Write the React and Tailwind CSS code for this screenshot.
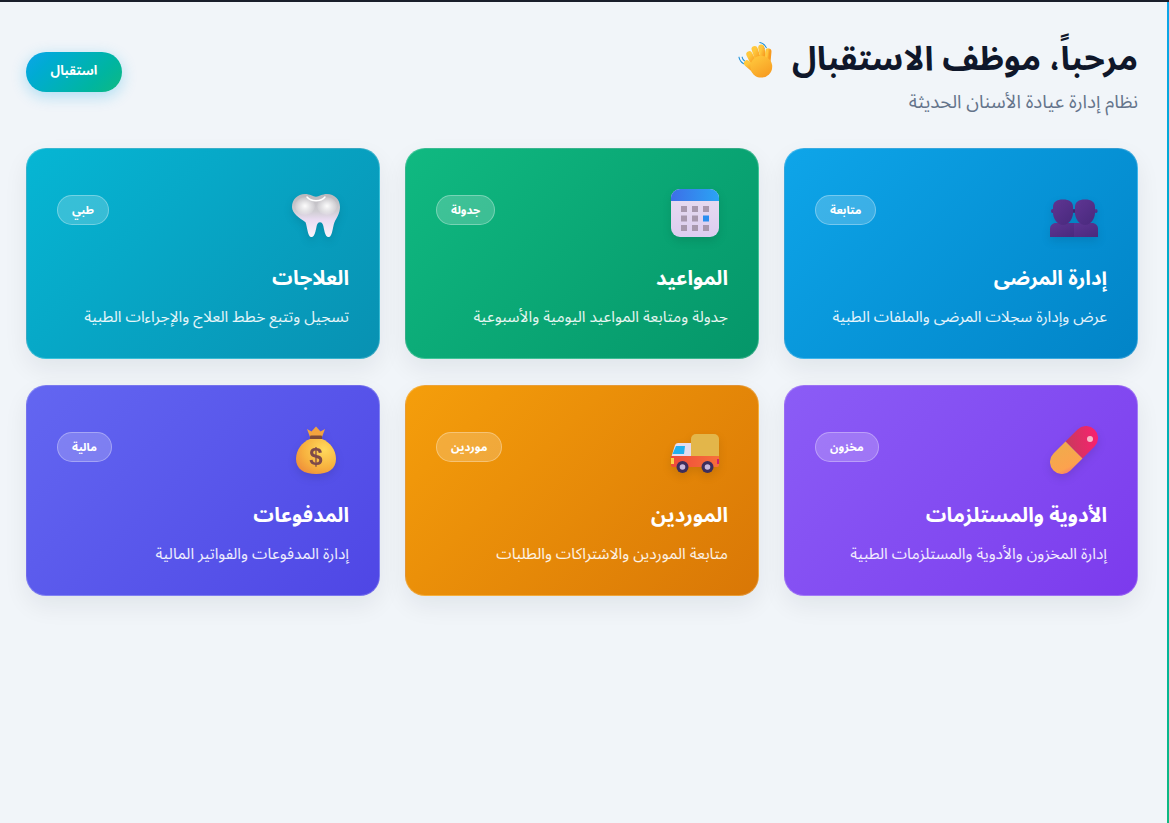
import React from "react";

const WaveIcon = () => (
  <svg viewBox="0 0 40 40" className="w-[38px] h-[38px]">
    <defs>
      <linearGradient id="handFill" x1="0.2" y1="0" x2="0.8" y2="1">
        <stop offset="0" stopColor="#ffc83d" />
        <stop offset="1" stopColor="#f79a20" />
      </linearGradient>
    </defs>
    <path d="M23 1.500c3 .6 5.500 2.600 6.800 5.500M23.500 5c1.800.5 3.200 1.600 4 3.200" fill="none" stroke="#1b8fd8" strokeWidth="1.100" strokeLinecap="round" />
    <path d="M1 17c.6 3 2.400 5.500 5 7M4.300 17c.4 1.600 1.300 3 2.600 4" fill="none" stroke="#1b8fd8" strokeWidth="1.100" strokeLinecap="round" />
    <g stroke="url(#handFill)" strokeWidth="6.500" strokeLinecap="round" fill="none">
      <path d="M17 24 12 14" />
      <path d="M22 22 17.500 8.500" />
      <path d="M27 20 24.500 7" />
      <path d="M31 22 32 11" />
      <path d="M17 30 9.500 23.500" />
    </g>
    <ellipse cx="24.500" cy="27" rx="11.500" ry="11.500" fill="url(#handFill)" />
  </svg>
);

const PeopleIcon = () => (
  <svg viewBox="0 0 48 48" className="w-12 h-12">
    <defs>
      <linearGradient id="personFill" x1="0" y1="0" x2="0.8" y2="1">
        <stop offset="0" stopColor="#5e3592" />
        <stop offset="1" stopColor="#4b2a7f" />
      </linearGradient>
    </defs>
    <g fill="url(#personFill)">
      <path d="M0 48v-8c0-3.500 2.500-6 6-6h19v14z" />
      <path d="M24 48V34h18c3.500 0 6 2.500 6 6v8z" />
      <ellipse cx="2.500" cy="22" rx="1.600" ry="2" />
      <ellipse cx="46" cy="22" rx="1.600" ry="2" />
      <ellipse cx="24" cy="22" rx="1.600" ry="2" fill="#3f2470" />
      <path d="M3 18c0-5 3.500-7.500 10-7.500s10 2.500 10 7.500v6c0 5-4 12-10 12S3 29 3 24z" />
      <path d="M25 18c0-5 3.500-7.500 10-7.500s10 2.500 10 7.500v6c0 5-4 12-10 12s-10-7-10-12z" />
    </g>
  </svg>
);

const CalendarIcon = () => {
  const cells = [
    [10, 17], [21, 17], [32, 17],
    [10, 26.5], [21, 26.5], [32, 26.5],
    [10, 36], [21, 36], [32, 36],
  ];
  return (
    <svg viewBox="0 0 48 48" className="w-12 h-12">
      <defs>
        <linearGradient id="calTop" x1="0" y1="0" x2="1" y2="0">
          <stop offset="0" stopColor="#3d6fe8" />
          <stop offset="1" stopColor="#2aa4f4" />
        </linearGradient>
        <linearGradient id="calBody" x1="0" y1="0" x2="0" y2="1">
          <stop offset="0" stopColor="#e8def0" />
          <stop offset="1" stopColor="#dccdf0" />
        </linearGradient>
      </defs>
      <rect x="0" y="0" width="48" height="48" rx="9" fill="url(#calBody)" />
      <path d="M0 12V9a9 9 0 0 1 9-9h30a9 9 0 0 1 9 9v3z" fill="url(#calTop)" />
      {cells.map(([x, y], i) => (
        <rect key={i} x={x} y={y} width="6" height="6" fill={i === 5 ? "#2a8ef0" : "#a898ae"} />
      ))}
    </svg>
  );
};

const ToothIcon = () => (
  <svg viewBox="0 0 48 48" className="w-12 h-12">
    <defs>
      <linearGradient id="toothFill" x1="0" y1="0" x2="0" y2="1">
        <stop offset="0" stopColor="#b9b7bc" />
        <stop offset="0.4" stopColor="#cfcdd2" />
        <stop offset="0.6" stopColor="#eadcf2" />
        <stop offset="1" stopColor="#fbf4fb" />
      </linearGradient>
      <radialGradient id="toothShine" cx="0.5" cy="0.5" r="0.55">
        <stop offset="0" stopColor="#ffffff" stopOpacity="0.95" />
        <stop offset="1" stopColor="#ffffff" stopOpacity="0" />
      </radialGradient>
    </defs>
    <path
      transform="translate(0 -0.45) scale(1 1.09)"
      d="M13 5c5 0 8 2.500 11 2.500S30 5 35 5c7.500 0 13 5 13 12 0 6-3.500 10-5.500 14-1.800 4-2 13-5.500 13.500-3.500.5-4.500-5-5.500-9.500-.6-2.500-1.500-4-3.500-4s-2.900 1.500-3.500 4c-1 4.500-2 10-5.500 9.500-3.500-.5-3.700-9.500-5.500-13.500C7.500 27 0 23 0 17 0 10 5.500 5 13 5z"
      fill="url(#toothFill)"
    />
    <ellipse cx="13" cy="17" rx="10" ry="9" fill="url(#toothShine)" />
    <ellipse cx="35" cy="17" rx="10" ry="9" fill="url(#toothShine)" />
    <path d="M15 8c4 5 14 5 18 0" fill="none" stroke="#ffffff" strokeWidth="1.500" strokeLinecap="round" />
  </svg>
);

const PillIcon = () => (
  <svg viewBox="0 0 48 48" className="w-12 h-12">
    <defs>
      <linearGradient id="pillRed" x1="0" y1="0" x2="1" y2="0.6">
        <stop offset="0" stopColor="#c83a5c" />
        <stop offset="1" stopColor="#f8216f" />
      </linearGradient>
      <linearGradient id="pillOrange" x1="0.4" y1="0" x2="0" y2="1">
        <stop offset="0" stopColor="#f3a94c" />
        <stop offset="0.7" stopColor="#fca24e" />
        <stop offset="1" stopColor="#f87272" />
      </linearGradient>
    </defs>
    <g transform="rotate(-45 24 24)">
      <path d="M24 12h17a12 12 0 0 1 0 24H24z" fill="url(#pillRed)" />
      <path d="M24 12H7a12 12 0 0 0 0 24h17z" fill="url(#pillOrange)" />
    </g>
    <circle cx="40" cy="13" r="3" fill="#f9b8c8" />
  </svg>
);

const TruckIcon = () => (
  <svg viewBox="0 0 48 40" className="w-12 h-10">
    <defs>
      <linearGradient id="truckBase" x1="0" y1="0" x2="1" y2="0">
        <stop offset="0" stopColor="#ef4a3a" />
        <stop offset="1" stopColor="#f7703a" />
      </linearGradient>
    </defs>
    <path d="M20 5a5 5 0 0 1 5-5h18a5 5 0 0 1 5 5v19H20z" fill="#e3b64a" />
    <path d="M0 24 4 11a4 4 0 0 1 3-2h13v15z" fill="#e4dcee" />
    <path d="M1.500 20 5 12h9l-1 8z" fill="#22b0ee" />
    <path d="M0 22h48v9a2 2 0 0 1-2 2H2a2 2 0 0 1-2-2z" fill="url(#truckBase)" />
    <rect x="0" y="24" width="3" height="6" fill="#fbd24a" />
    <rect x="46" y="25" width="2" height="5" fill="#d01f6e" />
    <g>
      <circle cx="11.500" cy="33" r="6" fill="#3d2e5c" />
      <circle cx="11.500" cy="33" r="2.800" fill="#c9b9dc" />
      <circle cx="36.500" cy="33" r="6" fill="#3d2e5c" />
      <circle cx="36.500" cy="33" r="2.800" fill="#c9b9dc" />
    </g>
  </svg>
);

const MoneyBagIcon = () => (
  <svg viewBox="0 0 48 48" className="w-12 h-12">
    <defs>
      <radialGradient id="bagFill" cx="0.7" cy="0.3" r="0.85">
        <stop offset="0" stopColor="#ffd95c" />
        <stop offset="0.6" stopColor="#f7b23f" />
        <stop offset="1" stopColor="#ee8c3a" />
      </radialGradient>
    </defs>
    <path d="M15 3l4.500 2.500L24 .5l4.500 5L33 3l-3 8H18z" fill="#f2a33f" />
    <rect x="18" y="9.500" width="12" height="4" rx="1" fill="#7d4a3a" />
    <path d="M18 13h12c8 3 14 11 14 20 0 10-8 15-20 15S4 43 4 33c0-9 6-17 14-20z" fill="url(#bagFill)" />
    <text x="24" y="39" textAnchor="middle" fontFamily="Liberation Sans, sans-serif" fontSize="24" fontWeight="700" fill="#7d4a4a">$</text>
  </svg>
);

const cards = [
  { title: "إدارة المرضى", desc: "عرض وإدارة سجلات المرضى والملفات الطبية", tag: "متابعة", Icon: PeopleIcon, bg: "from-[#0ea5e9] to-[#0284c7]" },
  { title: "المواعيد", desc: "جدولة ومتابعة المواعيد اليومية والأسبوعية", tag: "جدولة", Icon: CalendarIcon, bg: "from-[#10b981] to-[#059669]" },
  { title: "العلاجات", desc: "تسجيل وتتبع خطط العلاج والإجراءات الطبية", tag: "طبي", Icon: ToothIcon, bg: "from-[#06b6d4] to-[#0891b2]" },
  { title: "الأدوية والمستلزمات", desc: "إدارة المخزون والأدوية والمستلزمات الطبية", tag: "مخزون", Icon: PillIcon, bg: "from-[#8b5cf6] to-[#7c3aed]" },
  { title: "الموردين", desc: "متابعة الموردين والاشتراكات والطلبات", tag: "موردين", Icon: TruckIcon, bg: "from-[#f59e0b] to-[#d97706]" },
  { title: "المدفوعات", desc: "إدارة المدفوعات والفواتير المالية", tag: "مالية", Icon: MoneyBagIcon, bg: "from-[#6366f1] to-[#4f46e5]" },
];

const ModuleCard = ({ title, desc, tag, Icon, bg }) => (
  <div className={`h-[211px] rounded-[20px] border border-white/20 bg-linear-135 ${bg} p-[30px] text-white shadow-[0_10px_25px_rgba(15,23,42,0.07)]`}>
    <div className="flex items-center justify-between h-[62px]">
      <div className="flex h-full w-[57px] items-end justify-start pb-1 pr-[9px] drop-shadow-[0_4px_4px_rgba(0,0,0,0.1)]">
        <Icon />
      </div>
      <span className="rounded-full border border-white/30 bg-white/20 px-[14px] h-[30px] leading-[28px] text-[11.5px] font-bold">
        {tag}
      </span>
    </div>
    <h3 className="mt-[22px] text-[20.4px] leading-[31px] font-bold">{title}</h3>
    <p className="mt-[11px] text-[15.5px] leading-[24px] text-white/90">{desc}</p>
  </div>
);

export default function App() {
  return (
    <div dir="rtl" className="min-h-screen flex flex-col bg-[#f1f5f9] font-['Noto_Sans_Arabic',sans-serif]">
      <div className="h-[2px] bg-[#1a1f2b]" />
      <div className="flex flex-1">
        <div className="w-[2px] bg-linear-to-b from-[#0ea5e9] to-[#10b981]" />
        <main className="flex-1 pr-[29px] pl-[26px] pt-[31px]">
          <header className="flex items-start justify-between mb-[33px]">
            <div>
              <h1 className="flex items-center gap-[16px] text-[33.4px] leading-[54px] font-bold text-[#0f172a]">
                مرحباً، موظف الاستقبال
                <WaveIcon />
              </h1>
              <p className="mt-[2px] text-[18.7px] leading-[26px] text-[#64748b]">نظام إدارة عيادة الأسنان الحديثة</p>
            </div>
            <button className="mt-[19px] h-10 w-24 rounded-full bg-linear-135 from-[#0ea5e9] to-[#10b981] text-[13px] font-bold text-white shadow-[0_4px_15px_rgba(14,165,233,0.3)]">
              استقبال
            </button>
          </header>
          <div className="grid grid-cols-3 gap-x-[25px] gap-y-[26px]">
            {cards.map((card) => (
              <ModuleCard key={card.title} {...card} />
            ))}
          </div>
        </main>
      </div>
    </div>
  );
}
